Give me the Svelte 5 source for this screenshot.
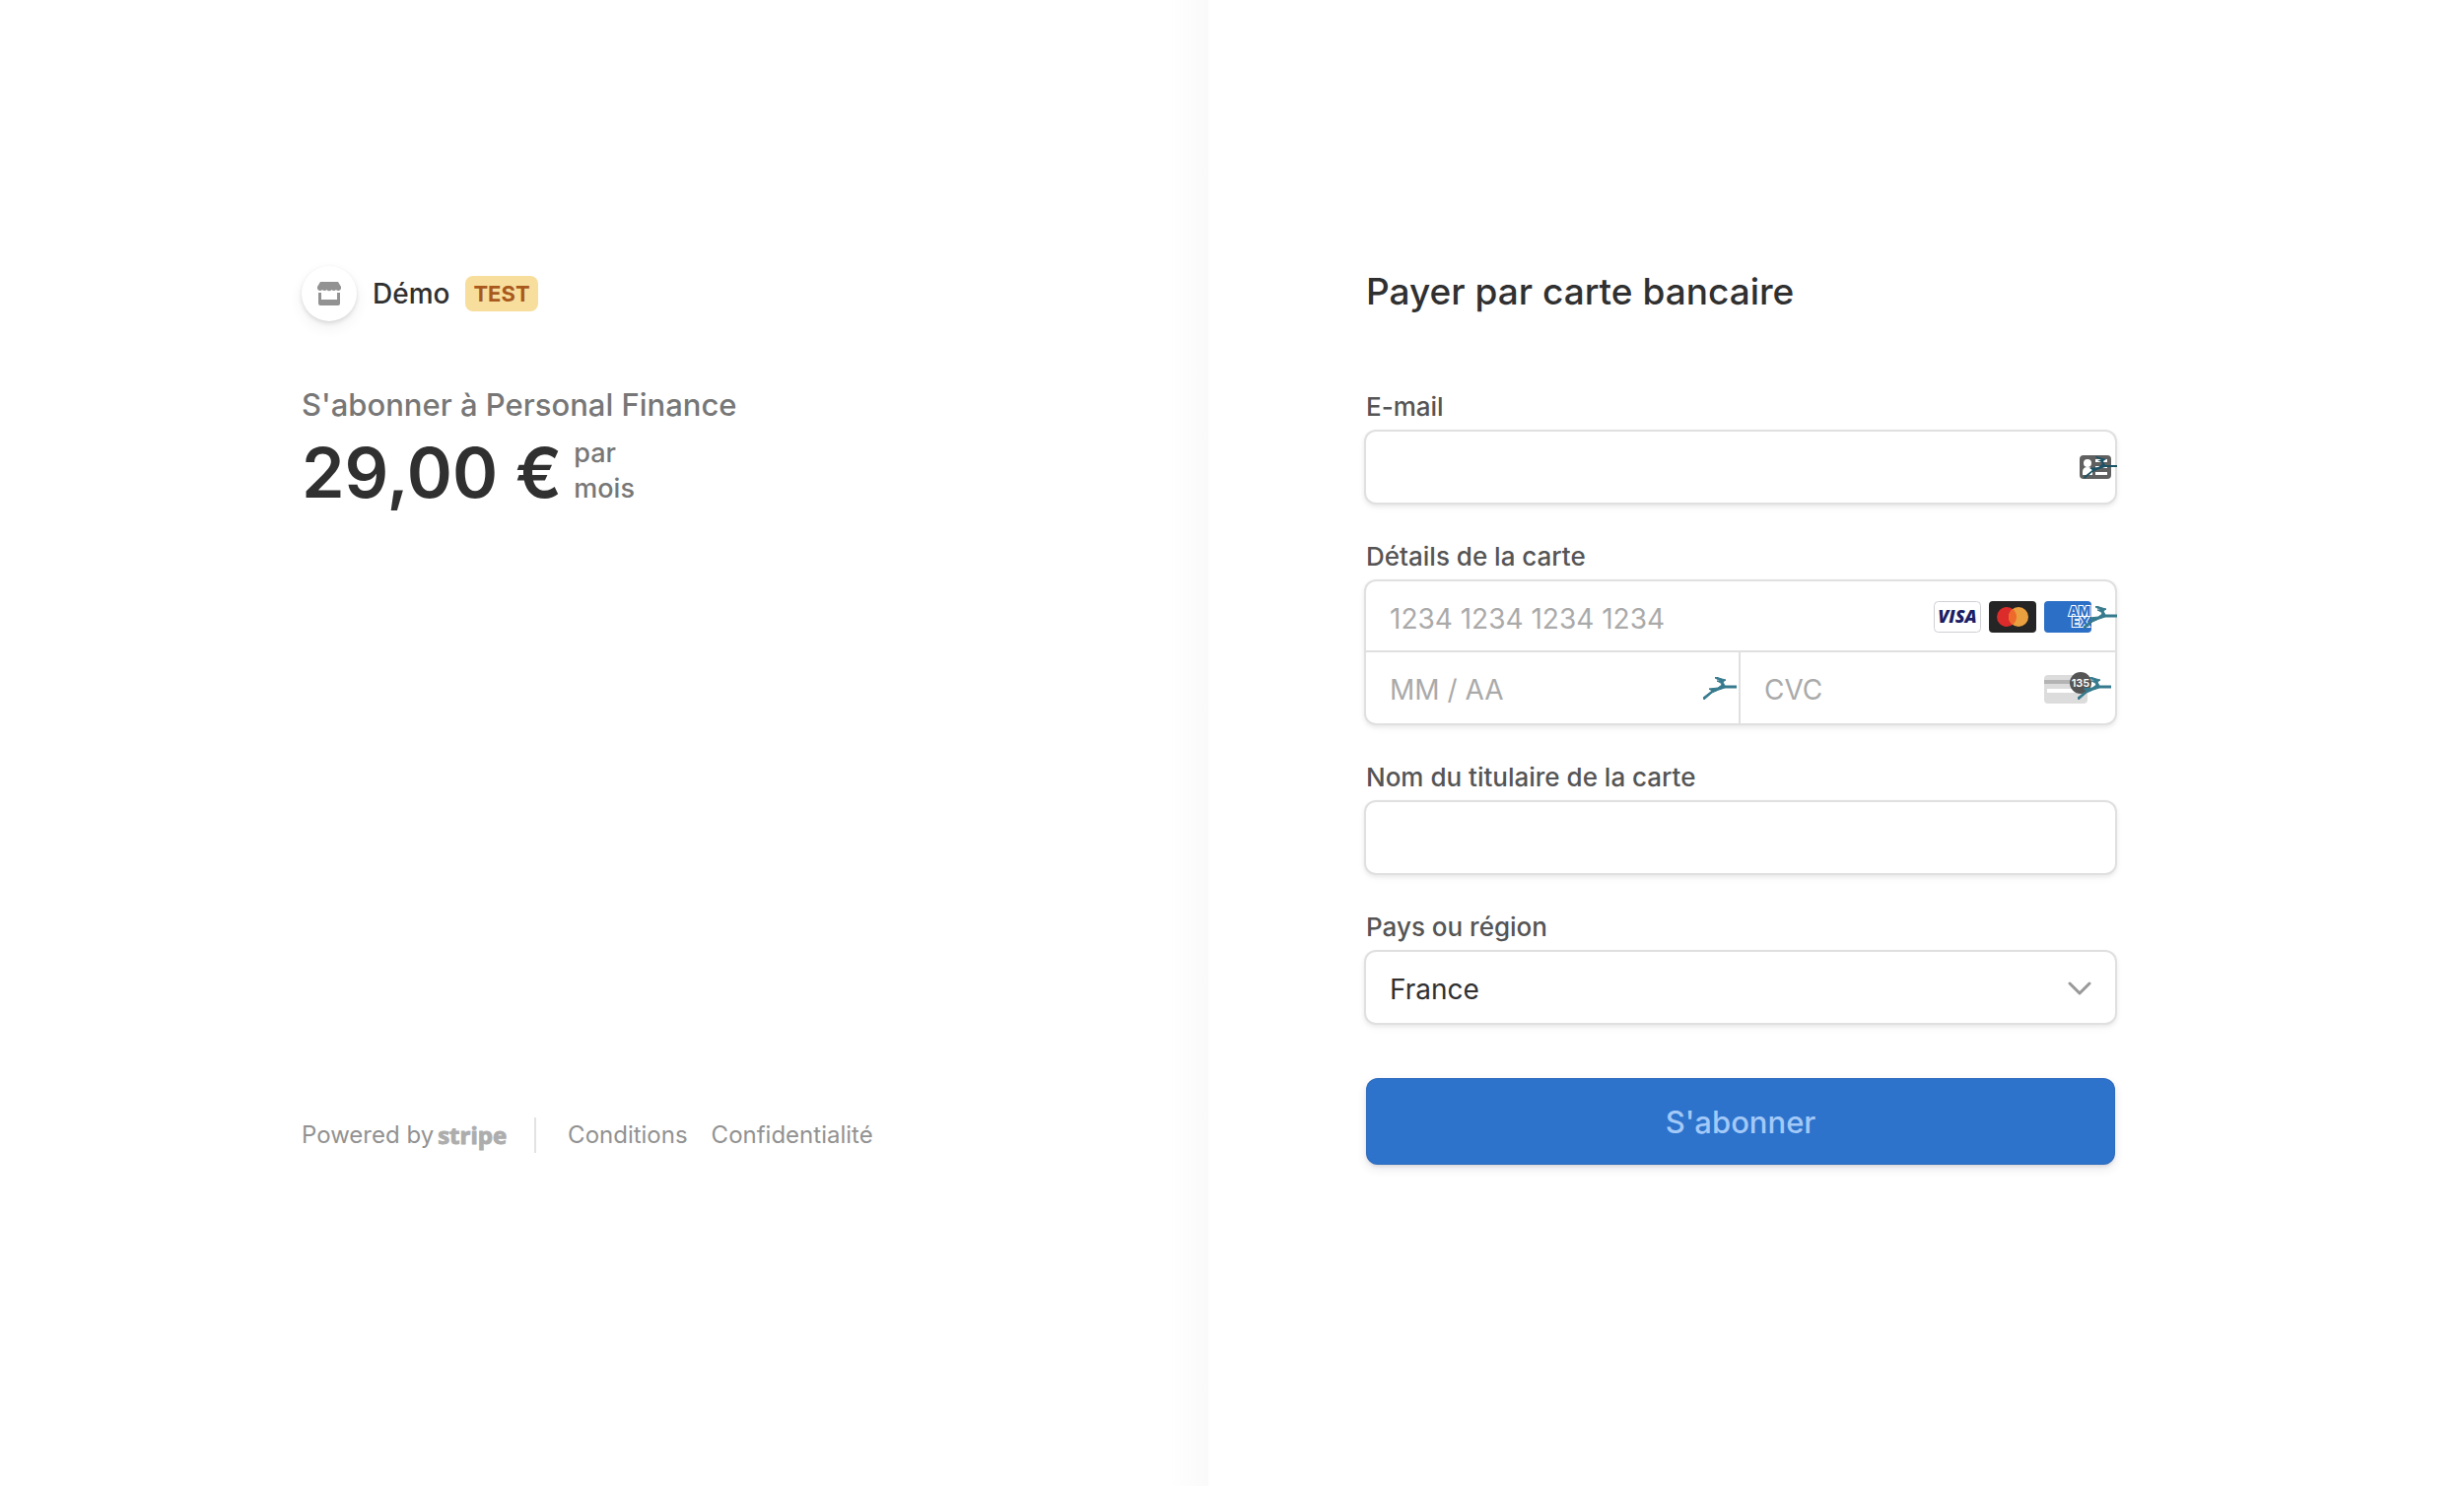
<script>
  let email = $state('');
  let number = $state('');
  let expiry = $state('');
  let cvc = $state('');
  let holder = $state('');
  let country = $state('France');
</script>

{#snippet bird()}
  <svg class="bird" viewBox="0 0 34 23" width="34" height="23" aria-hidden="true">
    <path d="M0 21 9 14 6 12l9-1 4-3-1-2-4-2h4l-6-3 1-1 6 2 4 1-3 2 2 4h12v2H22q-7 2-13 5l-8 7z" />
  </svg>
{/snippet}

<div class="page">
  <section class="summary">
    <div class="content">
      <header class="brand">
        <span class="avatar">
          <svg viewBox="0 0 24 24" width="24" height="24" aria-hidden="true">
            <path d="M3 0h18l3 5v2a3 3 0 0 1-5 1 3 3 0 0 1-4.500 0 3 3 0 0 1-5 0A3 3 0 0 1 5 8a3 3 0 0 1-5-1V5z" />
            <path d="M1 11h3v7h16v-7h3v11a2 2 0 0 1-2 2H3a2 2 0 0 1-2-2z" />
          </svg>
        </span>
        <span class="name">Démo</span>
        <span class="badge">TEST</span>
      </header>
      <h1>S'abonner à Personal Finance</h1>
      <div class="price">
        <span class="amount">29,00 €</span>
        <span class="period">par<br />mois</span>
      </div>
      <footer>
        <a class="powered" href="#stripe">Powered by <b>stripe</b></a>
        <a href="#conditions">Conditions</a>
        <a href="#confidentialite">Confidentialité</a>
      </footer>
    </div>
  </section>

  <main class="payment">
    <form class="content" onsubmit={(e) => e.preventDefault()}>
      <h2>Payer par carte bancaire</h2>

      <div class="field">
        <label for="email">E-mail</label>
        <div class="box">
          <input id="email" type="email" bind:value={email} />
          <span class="overlay email-icons">
            <svg viewBox="0 0 32 24" width="32" height="24" aria-hidden="true">
              <rect width="32" height="24" rx="4" fill="#606060" />
              <circle cx="8" cy="8" r="4" fill="#fff" />
              <path d="M3 20v-3q0-5 5-5t5 5v3z" fill="#fff" />
              <path d="M16 4h12v3H16zM16 11h12v2H16zM16 17h12v3H16z" fill="#fff" />
            </svg>
            {@render bird()}
          </span>
        </div>
      </div>

      <fieldset class="field">
        <legend>Détails de la carte</legend>
        <div class="box card">
          <div class="cell number">
            <input aria-label="Numéro de carte" placeholder="1234 1234 1234 1234" bind:value={number} />
            <span class="overlay brands">
              <svg viewBox="0 0 48 32" width="48" height="32" role="img" aria-label="Visa">
                <rect x="0.500" y="0.500" width="47" height="31" rx="4" fill="#fff" stroke="#cfcfd6" />
                <text x="24" y="22" class="visa">VISA</text>
              </svg>
              <svg viewBox="0 0 48 32" width="48" height="32" aria-hidden="true">
                <rect width="48" height="32" rx="4" fill="#252525" />
                <circle cx="18" cy="16" r="10" fill="#dc2b2b" />
                <circle cx="30" cy="16" r="10" fill="#eba03f" />
                <path d="M24 8a10 10 0 0 1 0 16 10 10 0 0 1 0-16z" fill="#ee6a2b" />
              </svg>
              <svg viewBox="0 0 48 32" width="48" height="32" role="img" aria-label="American Express">
                <rect width="48" height="32" rx="4" fill="#2b6fc6" />
                <text x="36" y="15" class="amex">AM</text>
                <text x="37" y="26" class="amex">EX</text>
              </svg>
              {@render bird()}
            </span>
          </div>
          <div class="cell expiry">
            <input aria-label="Date d'expiration" placeholder="MM / AA" bind:value={expiry} />
            <span class="overlay expiry-icon">{@render bird()}</span>
          </div>
          <div class="cell">
            <input aria-label="CVC" placeholder="CVC" bind:value={cvc} />
            <span class="overlay cvc-icons">
              <svg viewBox="0 0 48 32" width="48" height="32" aria-hidden="true">
                <rect y="3" width="44" height="29" rx="4" fill="#dcdcdc" />
                <path d="M0 8h44v4H0z" fill="#b4b4b4" />
                <path d="M3 17h38v4H3z" fill="#fff" />
                <circle cx="37" cy="11" r="11" fill="#555" />
                <text x="37" y="15" class="digits">135</text>
              </svg>
              {@render bird()}
            </span>
          </div>
        </div>
      </fieldset>

      <div class="field">
        <label for="holder">Nom du titulaire de la carte</label>
        <div class="box"><input id="holder" bind:value={holder} /></div>
      </div>

      <div class="field">
        <label for="country">Pays ou région</label>
        <div class="box">
          <select id="country" bind:value={country}>
            <option>France</option>
            <option>Belgique</option>
            <option>Suisse</option>
          </select>
          <span class="overlay chevron">
            <svg viewBox="0 0 24 16" width="24" height="16" aria-hidden="true">
              <path d="M2 3l10 10L22 3" />
            </svg>
          </span>
        </div>
      </div>

      <button type="submit">S'abonner</button>
    </form>
  </main>
</div>

<style>
  :global(body) {
    margin: 0;
    background: #fff;
  }
  .page {
    display: grid;
    grid-template-columns: 1fr 1fr;
    min-height: 100vh;
    box-sizing: border-box;
    padding-right: 48px;
    font-family: Inter, 'Liberation Sans', sans-serif;
    color: #303030;
  }
  .summary,
  .payment {
    display: flex;
    padding: 270px 160px 326px;
  }
  .summary {
    justify-content: flex-end;
    background: linear-gradient(to left, #fafafa, #fff 40px);
  }
  .content {
    width: 100%;
    max-width: 760px;
  }
  .summary .content {
    display: flex;
    flex-direction: column;
  }
  .brand {
    display: flex;
    align-items: center;
    height: 56px;
  }
  .avatar {
    display: grid;
    place-items: center;
    width: 56px;
    height: 56px;
    border-radius: 50%;
    box-shadow: 0 2px 4px rgba(0, 0, 0, 0.12), 0 6px 14px rgba(60, 66, 87, 0.08);
  }
  .avatar svg {
    fill: #929292;
  }
  .name {
    margin: 0 16px;
    font-size: 28px;
    font-weight: 500;
  }
  .badge {
    padding: 0 8px;
    border-radius: 8px;
    background: #f8de9c;
    color: #a9591c;
    font-size: 22px;
    font-weight: 700;
    line-height: 36px;
  }
  h1 {
    margin: 64px 0 0;
    color: #777;
    font-size: 31px;
    font-weight: 500;
    line-height: 42px;
  }
  .price {
    display: flex;
    gap: 12px;
    margin-top: 8px;
  }
  .amount {
    font-size: 70px;
    font-weight: 600;
    line-height: 80px;
  }
  .period {
    padding-top: 2px;
    color: #777;
    font-size: 27px;
    font-weight: 500;
    line-height: 36px;
  }
  footer {
    display: flex;
    align-items: center;
    gap: 24px;
    margin-top: auto;
    padding-bottom: 12px;
  }
  footer a {
    color: #929292;
    font-size: 24px;
    line-height: 36px;
    text-decoration: none;
  }
  .powered {
    display: flex;
    gap: 4px;
    margin-right: 8px;
    padding-right: 28px;
    border-right: 2px solid #e3e3e3;
  }
  .powered b {
    color: #adadad;
    font-family: 'Open Sans', sans-serif;
    font-size: 24px;
    font-weight: 700;
    -webkit-text-stroke: 1px #adadad;
  }
  h2 {
    margin: 0;
    font-size: 37px;
    font-weight: 500;
    line-height: 52px;
  }
  .field {
    margin: 40px 0 0;
    padding: 0;
    border: 0;
    min-width: 0;
  }
  h2 + .field {
    margin-top: 76px;
  }
  label,
  legend {
    display: block;
    padding: 0 0 10px;
    color: #555;
    font-size: 26px;
    font-weight: 500;
    line-height: 30px;
  }
  .box {
    position: relative;
    border-radius: 10px;
    background: #fff;
    box-shadow: 0 0 0 2px #e0e0e0, 0 2px 4px 2px rgba(0, 0, 0, 0.07), 0 4px 12px rgba(0, 0, 0, 0.04);
  }
  input,
  select {
    display: block;
    box-sizing: border-box;
    width: 100%;
    height: 72px;
    padding: 4px 24px 0;
    border: 0;
    border-radius: 10px;
    outline: 0;
    background: transparent;
    color: #303030;
    font: 400 28px Inter, 'Liberation Sans', sans-serif;
    appearance: none;
  }
  input::placeholder {
    color: #aaa;
    opacity: 1;
  }
  .card {
    display: grid;
    grid-template-columns: 1fr 1fr;
  }
  .cell {
    position: relative;
  }
  .number {
    grid-column: 1 / -1;
    border-bottom: 2px solid #e0e0e0;
  }
  .number input {
    height: 70px;
    padding-top: 6px;
  }
  .expiry {
    border-right: 2px solid #e0e0e0;
  }
  .overlay {
    position: absolute;
    right: 0;
    top: 0;
    bottom: 0;
    display: flex;
    align-items: center;
    pointer-events: none;
  }
  .bird {
    fill: #367a8e;
    stroke: #367a8e;
  }
  .email-icons {
    right: -2px;
  }
  .email-icons .bird {
    margin-left: -28px;
    fill: #1b5266;
    stroke: none;
  }
  .brands {
    right: -2px;
    gap: 8px;
    padding-top: 2px;
  }
  .brands .bird {
    margin-left: -16px;
  }
  .expiry-icon {
    right: 2px;
  }
  .cvc-icons {
    right: 4px;
  }
  .cvc-icons .bird {
    margin-left: -14px;
  }
  .visa {
    fill: #1b1f66;
    font: italic 800 18px 'Open Sans', sans-serif;
    text-anchor: middle;
  }
  .amex {
    fill: #2b6fc6;
    stroke: #fff;
    stroke-width: 2;
    paint-order: stroke;
    font: 800 13px Inter, sans-serif;
    text-anchor: middle;
  }
  .digits {
    fill: #fff;
    font: 600 11px Inter, sans-serif;
    text-anchor: middle;
  }
  .chevron {
    right: 24px;
    padding-top: 2px;
  }
  .chevron path {
    fill: none;
    stroke: #999;
    stroke-width: 3;
    stroke-linecap: round;
    stroke-linejoin: round;
  }
  button {
    display: block;
    width: 100%;
    height: 88px;
    margin-top: 56px;
    border: 0;
    border-radius: 12px;
    background: #2d73cb;
    box-shadow: inset 0 0 0 1px rgba(50, 50, 93, 0.12), 0 4px 10px rgba(50, 50, 93, 0.12), 0 2px 3px rgba(0, 0, 0, 0.08);
    color: #a3c9f8;
    font: 500 31px Inter, 'Liberation Sans', sans-serif;
  }
</style>
